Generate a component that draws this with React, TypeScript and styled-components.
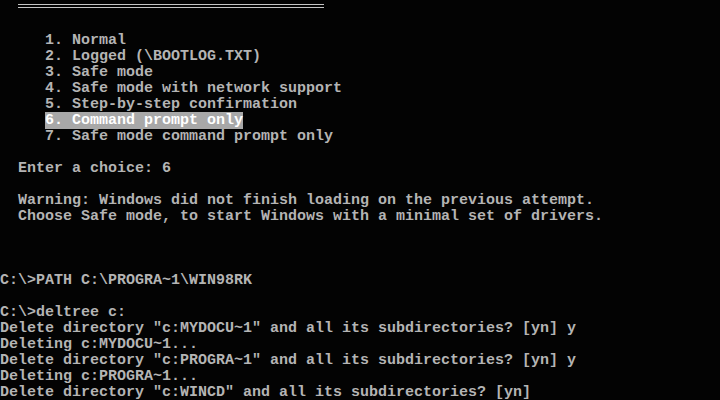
import React from "react";
import styled, { createGlobalStyle } from "styled-components";

const Global = createGlobalStyle`
  html, body { margin: 0; padding: 0; background: #000; }
  body { width: 720px; height: 400px; overflow: hidden; }
`;

const CELL = 9;

const Screen = styled.div`
  width: 720px;
  height: 400px;
  background: #030303;
  color: #b4b4b4;
  font-family: "Liberation Mono", "DejaVu Sans Mono", monospace;
  font-weight: bold;
  font-size: 15px;
  line-height: 16px;
  overflow: hidden;
  display: flex;
  flex-direction: column;
`;

const Line = styled.div<{ $indent?: number }>`
  height: 16px;
  box-sizing: border-box;
  padding-top: 1px;
  white-space: pre;
  padding-left: ${(p) => (p.$indent ?? 0) * CELL}px;
`;

const RuleRow = styled.div`
  height: 16px;
  padding: 4px 0 0 ${2 * CELL}px;
  box-sizing: border-box;
`;

const DoubleRule = styled.div`
  width: ${34 * CELL}px;
  height: 2px;
  border-top: 1px solid #c4c4c4;
  border-bottom: 1px solid #c4c4c4;
`;

const Highlight = styled.span`
  background: #a8a8a8;
  color: #ffffff;
`;

const menu = [
  "1. Normal",
  "2. Logged (\\BOOTLOG.TXT)",
  "3. Safe mode",
  "4. Safe mode with network support",
  "5. Step-by-step confirmation",
  "6. Command prompt only",
  "7. Safe mode command prompt only",
];

export default function App() {
  return (
    <>
      <Global />
      <Screen>
        <RuleRow>
          <DoubleRule />
        </RuleRow>
        <Line />
        {menu.map((m, i) => (
          <Line key={m} $indent={5}>
            {i === 5 ? <Highlight>{m}</Highlight> : m}
          </Line>
        ))}
        <Line />
        <Line $indent={2}>Enter a choice: 6</Line>
        <Line />
        <Line $indent={2}>Warning: Windows did not finish loading on the previous attempt.</Line>
        <Line $indent={2}>Choose Safe mode, to start Windows with a minimal set of drivers.</Line>
        <Line />
        <Line />
        <Line />
        <Line>C:\&gt;PATH C:\PROGRA~1\WIN98RK</Line>
        <Line />
        <Line>C:\&gt;deltree c:</Line>
        <Line>Delete directory "c:MYDOCU~1" and all its subdirectories? [yn] y</Line>
        <Line>Deleting c:MYDOCU~1...</Line>
        <Line>Delete directory "c:PROGRA~1" and all its subdirectories? [yn] y</Line>
        <Line>Deleting c:PROGRA~1...</Line>
        <Line>Delete directory "c:WINCD" and all its subdirectories? [yn]</Line>
      </Screen>
    </>
  );
}
